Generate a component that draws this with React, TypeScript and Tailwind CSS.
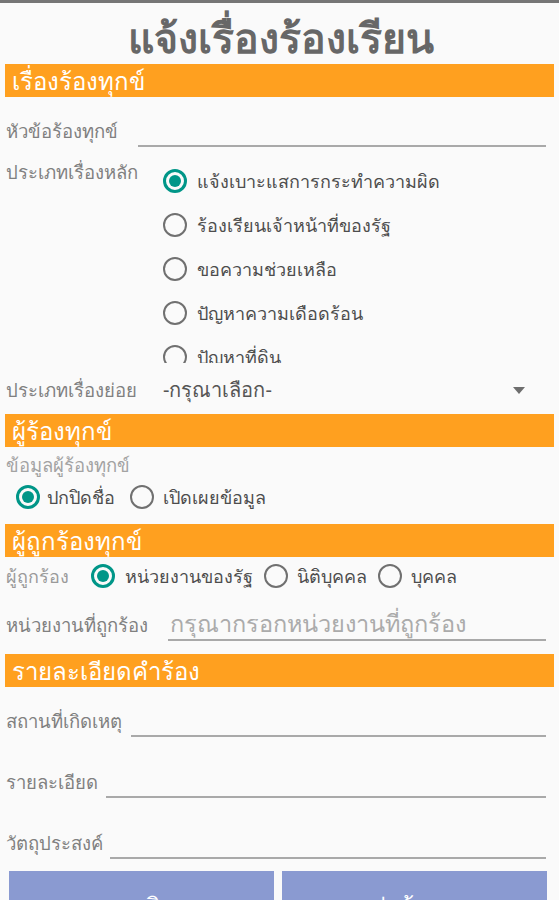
import { ReactNode } from 'react';

const font = { fontFamily: '"Noto Sans", "Open Sans", sans-serif' };

function SectionBar({ title }: { title: string }) {
  return (
    <div className="mx-[5px] h-[33px] bg-[#ffa01f] pl-[7px] text-[24px] leading-[33px] text-white">
      {title}
    </div>
  );
}

function Radio({ checked, label, textClass }: { checked?: boolean; label: string; textClass?: string }) {
  return (
    <div className="flex items-center">
      <div
        className={
          checked
            ? 'w-[24px] h-[24px] shrink-0 rounded-full border-[3px] border-[#009688] flex items-center justify-center'
            : 'w-[24px] h-[24px] shrink-0 rounded-full border-2 border-[#707070]'
        }
      >
        {checked && <div className="w-[12px] h-[12px] rounded-full bg-[#009688]" />}
      </div>
      <span className={textClass ?? 'ml-[10px] text-[18px] text-[#4d4d4d]'}>{label}</span>
    </div>
  );
}

function LineField({
  label,
  labelWidth,
  rowClass,
  children,
}: {
  label: string;
  labelWidth: string;
  rowClass: string;
  children?: ReactNode;
}) {
  return (
    <div className={`flex items-end pl-[6px] pr-[13px] ${rowClass}`}>
      <div className="flex h-[32px] w-full items-center">
        <span className={`${labelWidth} shrink-0 text-[18.5px] text-[#808080]`}>{label}</span>
        <div className="flex h-full flex-1 items-center border-b-2 border-[#a9a9a9] pl-[2px]">{children}</div>
      </div>
    </div>
  );
}

export default function App() {
  const mainTypes = [
    'แจ้งเบาะแสการกระทำความผิด',
    'ร้องเรียนเจ้าหน้าที่ของรัฐ',
    'ขอความช่วยเหลือ',
    'ปัญหาความเดือดร้อน',
    'ปัญหาที่ดิน',
  ];

  return (
    <div className="w-[559px] h-[900px] overflow-hidden bg-[#fafafa]" style={font}>
      <div className="h-[3px] bg-[#767676]" />
      <div className="flex h-[61px] items-center justify-center pt-[9px] pl-[2px] text-[41px] font-bold text-[#676767]">
        แจ้งเรื่องร้องเรียน
      </div>

      <SectionBar title="เรื่องร้องทุกข์" />
      <LineField label="หัวข้อร้องทุกข์" labelWidth="w-[132px]" rowClass="h-[60px] pb-[10px]" />

      <div className="flex h-[206px] pl-[6px]">
        <div className="w-[157px] shrink-0 text-[18.5px] leading-[30px] text-[#808080]">ประเภทเรื่องหลัก</div>
        <div className="flex-1 overflow-hidden pt-[2px]">
          {mainTypes.map((t, i) => (
            <div key={i} className="flex h-[44px] items-center">
              <Radio checked={i === 0} label={t} />
            </div>
          ))}
        </div>
      </div>

      <div className="flex h-[51px] items-center pl-[6px] pr-[34px] pt-[3px]">
        <span className="w-[157px] shrink-0 text-[18.5px] text-[#808080]">ประเภทเรื่องย่อย</span>
        <span className="flex-1 text-[20px] text-[#555]">-กรุณาเลือก-</span>
        <svg width="12" height="7" viewBox="0 0 12 7">
          <path d="M0 0 L12 0 L6 7 Z" fill="#6e6e6e" />
        </svg>
      </div>

      <SectionBar title="ผู้ร้องทุกข์" />
      <div className="flex h-[36px] items-center pl-[6px] text-[18.5px] text-[#a3a3a3]">ข้อมูลผู้ร้องทุกข์</div>
      <div className="flex h-[28px] items-center gap-[15px] pl-[16px]">
        <Radio checked label="ปกปิดชื่อ" textClass="ml-[7px] text-[18px] text-[#4d4d4d]" />
        <Radio label="เปิดเผยข้อมูล" textClass="ml-[9px] text-[18px] text-[#4d4d4d]" />
      </div>
      <div className="h-[13px]" />

      <SectionBar title="ผู้ถูกร้องทุกข์" />
      <div className="flex h-[38px] items-center pl-[6px]">
        <span className="w-[85px] shrink-0 text-[18px] text-[#9a9a9a]">ผู้ถูกร้อง</span>
        <div className="flex items-center gap-[11px]">
          <Radio checked label="หน่วยงานของรัฐ" textClass="ml-[10px] text-[18px] text-[#4d4d4d]" />
          <Radio label="นิติบุคคล" textClass="ml-[9px] text-[18px] text-[#4d4d4d]" />
          <Radio label="บุคคล" textClass="ml-[9px] text-[18px] text-[#4d4d4d]" />
        </div>
      </div>
      <LineField label="หน่วยงานที่ถูกร้อง" labelWidth="w-[162px]" rowClass="h-[59px] pb-[13px]">
        <span className="text-[23.5px] text-[#ababab]">กรุณากรอกหน่วยงานที่ถูกร้อง</span>
      </LineField>

      <SectionBar title="รายละเอียดคำร้อง" />
      <LineField label="สถานที่เกิดเหตุ" labelWidth="w-[125px]" rowClass="h-[61px] pb-[11px]" />
      <LineField label="รายละเอียด" labelWidth="w-[100px]" rowClass="h-[61px] pb-[11px]" />
      <LineField label="วัตถุประสงค์" labelWidth="w-[104px]" rowClass="h-[61px] pb-[11px]" />

      <div className="mt-[1px] flex gap-[8px] pl-[9px] pr-[12px]">
        <button className="h-[56px] flex-1 bg-[#8a9ad1] pt-[14px] text-[24px] leading-[36px] text-white">ยกเลิก</button>
        <button className="h-[56px] flex-1 bg-[#8a9ad1] pt-[14px] text-[24px] leading-[36px] text-white">ส่งข้อมูล</button>
      </div>
    </div>
  );
}
